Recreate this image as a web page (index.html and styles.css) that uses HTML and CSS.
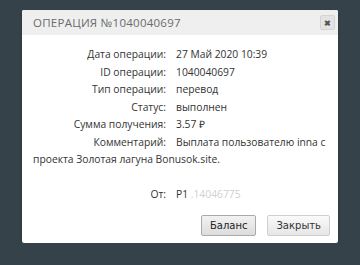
FILE: index.html
```html
<!DOCTYPE html>
<html lang="ru">
<head>
	<meta charset="UTF-8">
	<title>Операция</title>
	<link rel="stylesheet" href="styles.css">
</head>
<body>

	<div class="dialog">
		<div class="dialog-head">
			<span class="dialog-title">Операция №1040040697</span>
			<span class="dialog-close">&#10006;</span>
		</div>
		<div class="dialog-body">
			<div class="row"><span class="label">Дата операции:</span>27 Май 2020 10:39</div>
			<div class="row"><span class="label">ID операции:</span>1040040697</div>
			<div class="row"><span class="label">Тип операции:</span>перевод</div>
			<div class="row"><span class="label">Статус:</span>выполнен</div>
			<div class="row"><span class="label">Сумма получения:</span>3.57 &#8381;</div>
			<div class="row"><span class="label">Комментарий:</span>Выплата пользователю inna с проекта Золотая лагуна Bonusok.site.</div>
			<div class="row row-from"><span class="label">От:</span>P1 <span class="hidden-num">.14046775</span></div>
		</div>
		<div class="dialog-foot">
			<button class="btn btn-main">Баланс</button>
			<button class="btn">Закрыть</button>
		</div>
	</div>

</body>
</html>
```

FILE: styles.css
```css
body {
	margin: 0;
	background: #36424a;
	font-family: "Open Sans", "Liberation Sans", sans-serif;
}
.dialog {
	width: 316px;
	margin: 10px 0 0 22px;
	background: #fff;
	border-radius: 2px;
	box-shadow: 0 2px 3px rgba(0,0,0,.3);
}
.dialog-head {
	height: 25px;
	display: flex;
	align-items: center;
	justify-content: space-between;
	padding: 0 3px 0 11px;
	background: #efefef;
	border-radius: 2px 2px 0 0;
}
.dialog-title {
	font-size: 11.5px;
	letter-spacing: 0.25px;
	text-transform: uppercase;
	color: #6b6b6b;
}
.dialog-close {
	width: 13px;
	height: 13px;
	line-height: 13px;
	text-align: center;
	font-size: 8px;
	font-weight: bold;
	color: #555;
	background: #e3e3e3;
	border: 1px solid #d4d4d4;
	border-radius: 2px;
}
.dialog-body {
	padding: 11px 8px 0 11px;
	font-size: 10.3px;
	line-height: 17.5px;
	color: #333;
}
.label {
	display: inline-block;
	width: 133px;
	margin-right: 10px;
	text-align: right;
}
.row-from { margin-top: 17px }
.hidden-num { color: #d0d0d0 }
.dialog-foot {
	display: flex;
	justify-content: flex-end;
	gap: 11px;
	padding: 12px 8px 7px;
}
.btn {
	height: 21px;
	padding: 0 8px;
	font-family: "DejaVu Sans", sans-serif;
	font-size: 10px;
	color: #333;
	background: linear-gradient(#fafafa, #e6e6e6);
	border: 1px solid #cfcfcf;
	border-radius: 2px;
}
.btn-main {
	border-color: #aaa;
	background: linear-gradient(#f2f2f2, #dcdcdc);
	color: #222;
}
```
